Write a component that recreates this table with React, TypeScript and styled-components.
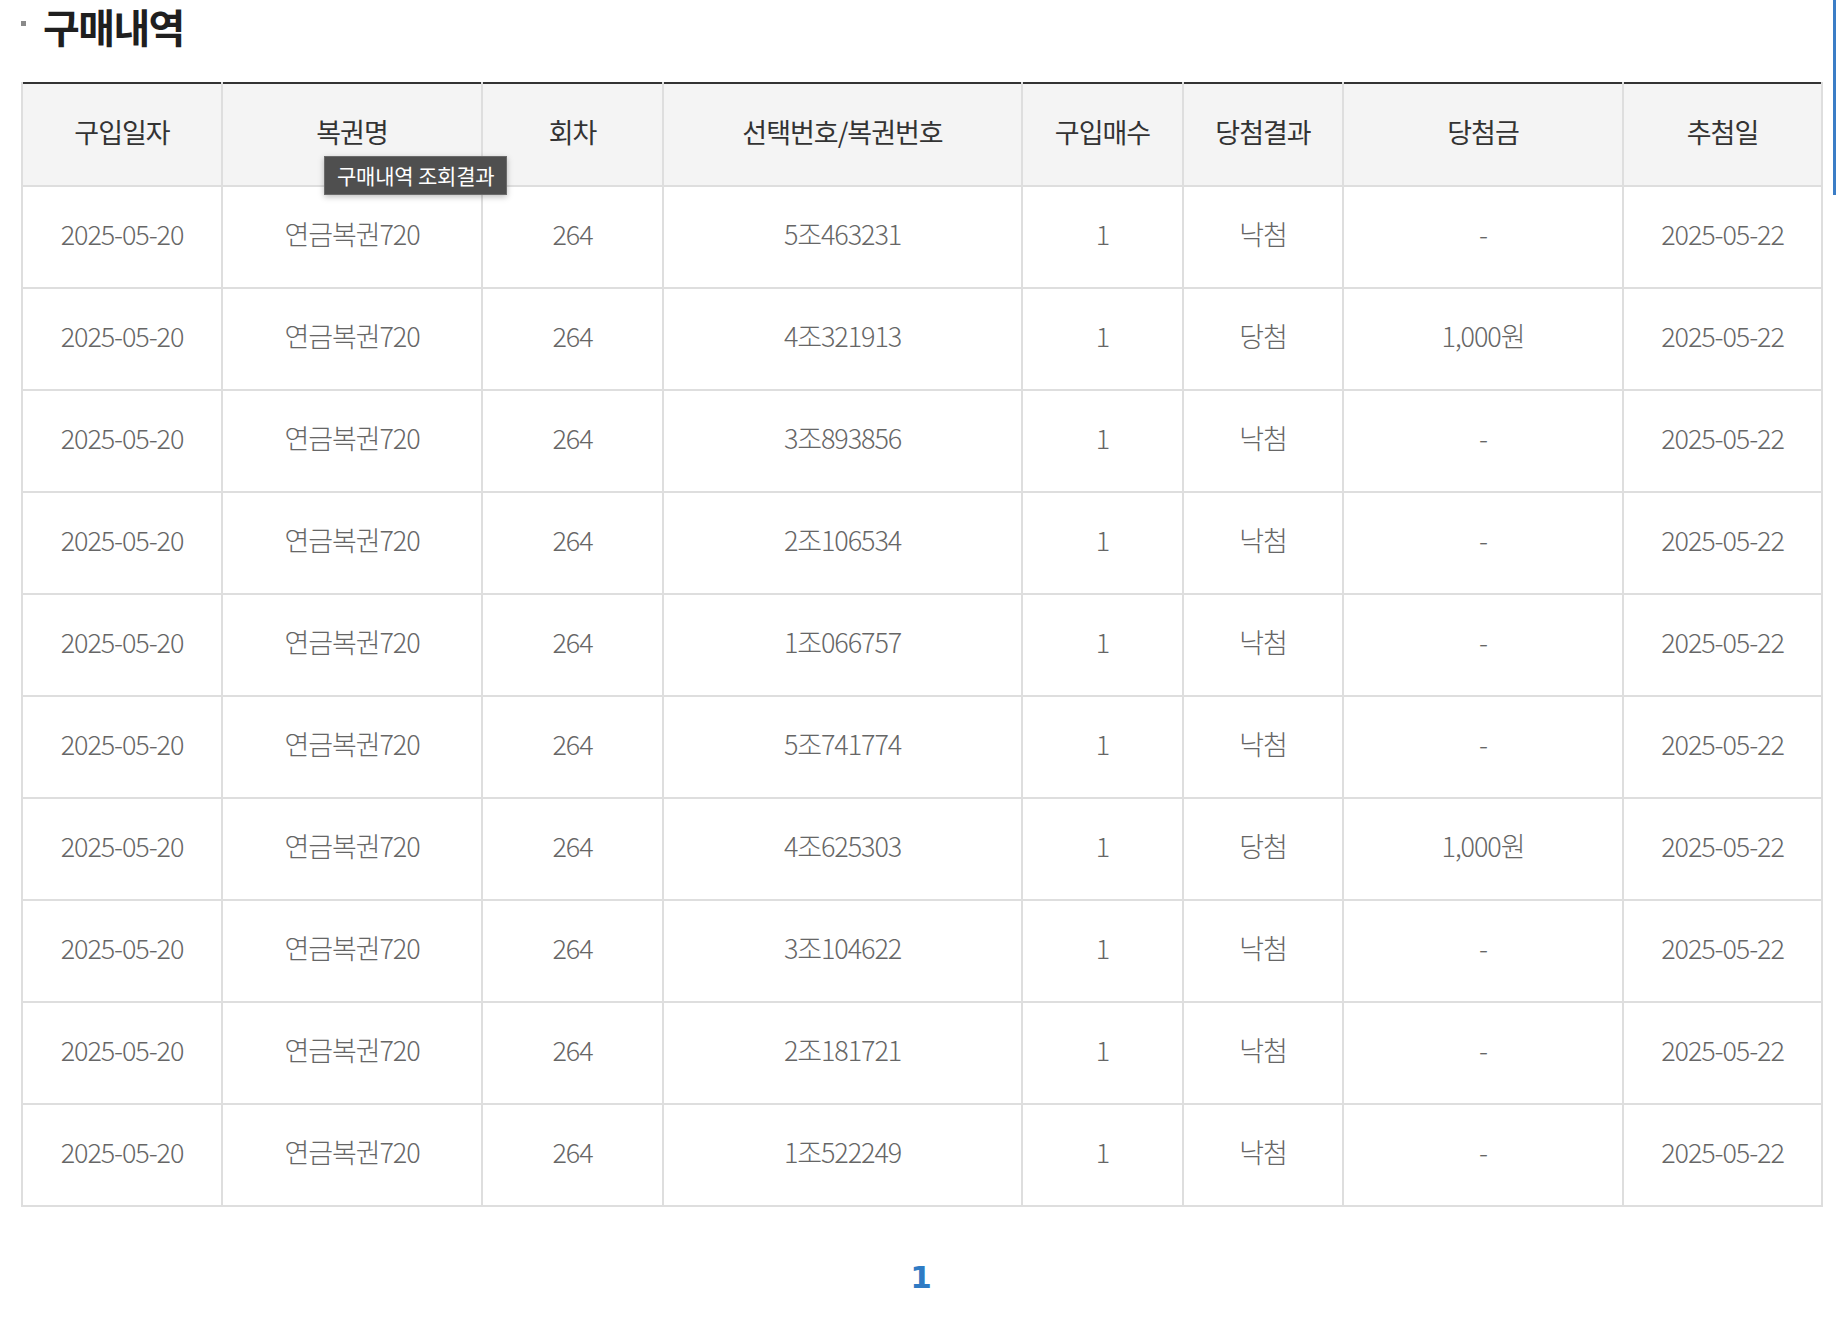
import styled, { createGlobalStyle } from "styled-components";
import React from "react";

const GlobalStyle = createGlobalStyle`
  html, body {
    margin: 0;
    padding: 0;
    background: #fff;
  }
  body {
    font-family: "Noto Sans CJK KR", "Noto Sans", sans-serif;
    color: #333;
  }
`;

const Page = styled.div`
  width: 1836px;
  padding: 2px 15px 0 21px;
  box-sizing: border-box;
`;

const TitleRow = styled.div`
  display: flex;
  align-items: center;
  gap: 17px;
  height: 48px;
  margin-bottom: 32px;
`;

const Bullet = styled.span`
  width: 5px;
  height: 5px;
  background: #8a8a8a;
  margin-top: -6px;
`;

const Title = styled.h2`
  margin: 0;
  font-size: 40px;
  font-weight: 700;
  letter-spacing: -1.6px;
  color: #1f1f1f;
  line-height: 48px;
`;

const Table = styled.table`
  width: 1800px;
  table-layout: fixed;
  border-collapse: collapse;
  border-top: 2px solid #333;
`;

const HeadCell = styled.th`
  position: relative;
  height: 94px;
  padding: 0 0 7px;
  background: #f4f4f4;
  border: 2px solid #dedede;
  border-top: none;
  font-size: 27px;
  font-weight: 400;
  letter-spacing: -1px;
  color: #333;
  text-align: center;
`;

const Cell = styled.td`
  height: 93px;
  padding: 0 0 7px;
  border: 2px solid #dedede;
  font-size: 27px;
  font-weight: 300;
  letter-spacing: -1.1px;
  color: #666;
  text-align: center;
`;

const Tooltip = styled.div`
  position: absolute;
  left: 101px;
  top: 72px;
  z-index: 2;
  padding: 0 12px;
  height: 37px;
  line-height: 36px;
  white-space: nowrap;
  background: #4f4f4f;
  border: 1px solid #6b6b6b;
  box-shadow: 0 2px 6px rgba(0, 0, 0, 0.25);
  color: #fff;
  font-size: 21px;
  font-weight: 400;
  letter-spacing: -0.2px;
`;

const Pagination = styled.div`
  display: flex;
  justify-content: center;
  width: 1800px;
  margin-top: 50px;
`;

const PageNumber = styled.a`
  font-family: "DejaVu Sans", sans-serif;
  font-size: 31px;
  font-weight: 700;
  line-height: 40px;
  color: #2f7bc4;
  text-decoration: none;
  cursor: pointer;
`;

const EdgeBar = styled.div`
  position: fixed;
  top: 0;
  right: 0;
  width: 3px;
  height: 195px;
  background: #3b7dc6;
`;

const columns = [
  { label: "구입일자", width: 200 },
  { label: "복권명", width: 260 },
  { label: "회차", width: 181 },
  { label: "선택번호/복권번호", width: 359 },
  { label: "구입매수", width: 161 },
  { label: "당첨결과", width: 160 },
  { label: "당첨금", width: 280 },
  { label: "추첨일", width: 199 },
];

type Purchase = {
  number: string;
  won: boolean;
};

const purchases: Purchase[] = [
  { number: "5조463231", won: false },
  { number: "4조321913", won: true },
  { number: "3조893856", won: false },
  { number: "2조106534", won: false },
  { number: "1조066757", won: false },
  { number: "5조741774", won: false },
  { number: "4조625303", won: true },
  { number: "3조104622", won: false },
  { number: "2조181721", won: false },
  { number: "1조522249", won: false },
];

const App = () => {
  return (
    <>
      <GlobalStyle />
      <Page>
        <TitleRow>
          <Bullet />
          <Title>구매내역</Title>
        </TitleRow>

        <Table>
          <colgroup>
            {columns.map((c) => (
              <col key={c.label} style={{ width: c.width }} />
            ))}
          </colgroup>
          <thead>
            <tr>
              {columns.map((c, i) => (
                <HeadCell key={c.label}>
                  {c.label}
                  {i === 1 && <Tooltip>구매내역 조회결과</Tooltip>}
                </HeadCell>
              ))}
            </tr>
          </thead>
          <tbody>
            {purchases.map((p) => (
              <tr key={p.number}>
                <Cell>2025-05-20</Cell>
                <Cell>연금복권720</Cell>
                <Cell>264</Cell>
                <Cell>{p.number}</Cell>
                <Cell>1</Cell>
                <Cell>{p.won ? "당첨" : "낙첨"}</Cell>
                <Cell>{p.won ? "1,000원" : "-"}</Cell>
                <Cell>2025-05-22</Cell>
              </tr>
            ))}
          </tbody>
        </Table>

        <Pagination>
          <PageNumber>1</PageNumber>
        </Pagination>
      </Page>
      <EdgeBar />
    </>
  );
};

export default App;
